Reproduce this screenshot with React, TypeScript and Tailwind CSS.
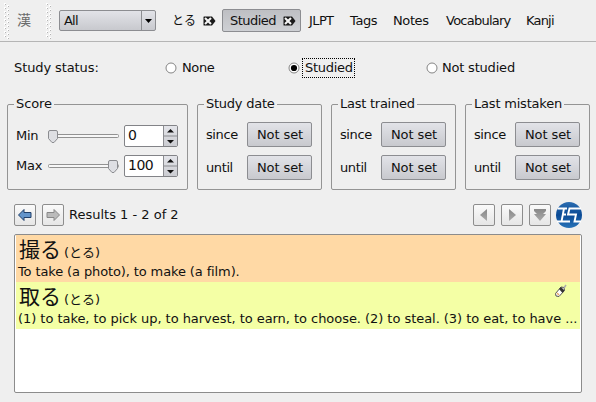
import React from "react";

const font = "font-['DejaVu_Sans','Noto_Sans_CJK_JP',sans-serif]";
const raised =
  "border border-[#8c8d91] rounded-[2px] bg-linear-to-b from-[#e2e3e8] to-[#c8c9ce]";

function Grip() {
  return (
    <svg width="6" height="36" viewBox="0 0 6 36" className="shrink-0">
      {Array.from({ length: 9 }, (_, i) => (
        <g key={i}>
          <rect x="0" y={i * 4} width="2" height="2" fill="#fff" />
          <rect x="1" y={1 + i * 4} width="1" height="1" fill="#b4b4b4" />
          <rect x="3" y={2 + i * 4} width="2" height="2" fill="#fff" />
          <rect x="4" y={3 + i * 4} width="1" height="1" fill="#b4b4b4" />
        </g>
      ))}
    </svg>
  );
}

function ClearTag() {
  return (
    <svg width="13" height="10" viewBox="0 0 13 10" className="shrink-0">
      <path d="M1 .5h8L12.500 5 9 9.500H1Q.5 9.500 .5 9V1Q.5.5 1 .5z" fill="#1a1a1a" />
      <path d="M2 2l6 6M8 2L2 8" stroke="#f4f4f4" strokeWidth="2.100" />
    </svg>
  );
}

function Radio({ on }: { on?: boolean }) {
  return (
    <svg width="12" height="12" viewBox="0 0 12 12" className="shrink-0">
      <circle cx="6" cy="6" r="5" fill="#fff" stroke="#858585" />
      {on && <circle cx="6" cy="6" r="3.1" fill="#000" />}
    </svg>
  );
}

function Group({ title, width, titleClass, children }: { title: string; width: string; titleClass: string; children: React.ReactNode }) {
  return (
    <section className={`relative h-[86px] rounded-[2px] border border-[#949494] ${width}`}>
      <h2 className={`absolute -top-[9px] left-[6px] bg-[#efefef] pl-[2px] leading-4 whitespace-nowrap ${titleClass}`}>{title}</h2>
      {children}
    </section>
  );
}

function DateGroup({ title, titleClass }: { title: string; titleClass: string }) {
  return (
    <Group title={title} width="w-[125px]" titleClass={titleClass}>
      <div className="flex flex-col gap-2 pt-[17px] pl-[8px]">
        {["since", "until"].map((label) => (
          <div key={label} className="flex h-[25px] items-center">
            <span className="w-[41px] tracking-[-0.4px]">{label}</span>
            <button className={`h-[25px] w-[65px] pl-px text-center tracking-[-0.1px] whitespace-nowrap ${raised}`}>Not set</button>
          </div>
        ))}
      </div>
    </Group>
  );
}

function Slider({ end }: { end?: boolean }) {
  return (
    <svg width="71" height="15" viewBox="0 0 71 15" className="shrink-0">
      <rect x="0.5" y="5.5" width="70" height="3" rx="1" fill="#f7f7f7" stroke="#929292" />
      <path
        transform={end ? "translate(60 0)" : "translate(0 0)"}
        d="M2 1.500h6q1.500 0 1.500 1.500v6.500L6 13.500H4L.5 9.500V3Q.5 1.500 2 1.500z"
        fill="#dedfe3"
        stroke="#8b8c90"
      />
    </svg>
  );
}

function Spin({ value }: { value: string }) {
  return (
    <div className="flex h-[22px] w-[54px] overflow-hidden rounded-[2px] border border-[#828387] bg-white">
      <span className="w-[38px] pl-[3px] text-[14px] leading-[19px] tracking-[-0.5px]">{value}</span>
      <svg width="14" height="20" viewBox="0 0 14 20" className="shrink-0 bg-linear-to-b from-[#e4e5ea] to-[#cbccd1]">
        <path d="M.5 0v20M0 10h14" stroke="#8b8c90" />
        <path d="M4 6.500h7L7.500 3zM4 14h7l-3.500 3.500z" fill="#111" />
      </svg>
    </div>
  );
}

function ToolButton({ children }: { children: React.ReactNode }) {
  return (
    <button className="flex size-[22px] items-center justify-center rounded-[2px] border border-[#8d8d8d] bg-linear-to-b from-[#fafafa] to-[#e6e6e6]">
      <svg width="20" height="20" viewBox="0 0 20 20" className="shrink-0">
        {children}
      </svg>
    </button>
  );
}

function Logo() {
  return (
    <svg width="28" height="28" viewBox="0 0 28 28" className="shrink-0">
      <defs>
        <linearGradient id="ball" x1="0" y1="0" x2="0" y2="1">
          <stop offset="0" stopColor="#2a6cb0" />
          <stop offset="0.5" stopColor="#0b4a95" />
          <stop offset="1" stopColor="#2873b8" />
        </linearGradient>
        <linearGradient id="fade" x1="0" y1="0" x2="0" y2="1">
          <stop offset="0" stopColor="#888" />
          <stop offset="1" stopColor="#aaa" />
        </linearGradient>
      </defs>
      <circle cx="14" cy="14" r="13" fill="url(#ball)" />
      <path d="M2.500 7.500H12M26 7.500H14.500L13 13.500H21L19.500 20.500H26M9 7.500L6.500 20.500H15M8 13.500h3M2 20.500h5" fill="none" stroke="#fff" strokeWidth="1.900" />
    </svg>
  );
}

function Entry({ word, gloss, bg, glossClass, children }: { word: string; gloss: string; bg: string; glossClass: string; children?: React.ReactNode }) {
  return (
    <article className={`relative h-[47px] pl-[3px] ${bg}`}>
      <div className="flex h-[29px] items-baseline gap-[3px] whitespace-nowrap leading-[30px]">
        <span className="text-[21px]">{word}</span>
        <span className="text-[13px]">(とる)</span>
      </div>
      <p className={`-ml-px whitespace-nowrap leading-4 ${glossClass}`}>{gloss}</p>
      {children}
    </article>
  );
}

export default function App() {
  return (
    <main className={`flex h-[402px] w-[596px] flex-col overflow-hidden bg-[#efefef] text-[13px] text-[#111] ${font}`}>
      <header className="flex h-[42px] shrink-0 items-center border-b border-[#b5b5b5] pl-1 whitespace-nowrap">
        <Grip />
        <span className="ml-[7px] w-[29px] text-[14px] text-[#6a6a6a]">漢</span>
        <Grip />
        <div className={`ml-[7px] flex h-[21px] w-[97px] items-center ${raised}`}>
          <span className="flex-1 pl-1 tracking-[-0.8px]">All</span>
          <span className="flex h-full w-[14px] items-center justify-center border-l border-[#8c8d91]">
            <svg width="7" height="4" viewBox="0 0 7 4"><path d="M0 0h7L3.500 4z" /></svg>
          </span>
        </div>
        <span className="ml-4 w-[31px] text-[12px]">とる</span>
        <ClearTag />
        <div className="ml-[6px] flex h-[23px] w-[79px] items-center rounded-[2px] border border-[#8c8d91] bg-linear-to-b from-[#bebfc3] to-[#ced0d4] pl-[7px]">
          <span className="w-[53px] tracking-[-0.55px]">Studied</span>
          <ClearTag />
        </div>
        <span className="ml-2 w-[41px] tracking-[-0.6px]">JLPT</span>
        <span className="w-[43px] tracking-[-0.4px]">Tags</span>
        <span className="w-[53px] tracking-[-0.4px]">Notes</span>
        <span className="w-[80px] tracking-[-0.75px]">Vocabulary</span>
        <span className="tracking-[-0.8px]">Kanji</span>
      </header>

      <div className="flex h-[52px] shrink-0 items-center pl-[14px] whitespace-nowrap">
        <span className="w-[151px] tracking-[-0.1px]">Study status:</span>
        <Radio />
        <span className="ml-[5px] w-[106px] tracking-[-0.4px]">None</span>
        <Radio on />
        <span className="ml-[2px] mr-[71px] h-5 w-[53px] border border-dotted border-black pl-[2px] leading-[18px] tracking-[-0.3px]">Studied</span>
        <Radio />
        <span className="ml-[4px] tracking-[-0.2px]">Not studied</span>
      </div>

      <div className="flex h-[108px] shrink-0 gap-[9px] pt-[10px] pl-[7px]">
        <Group title="Score" width="w-[181px]" titleClass="w-[40px] tracking-[-0.1px]">
          <div className="flex flex-col gap-2 pt-[20px] pl-[8px]">
            <div className="flex h-[22px] items-center">
              <span className="w-[32px] tracking-[-0.3px]">Min</span><Slider /><span className="w-[5px]" /><Spin value="0" />
            </div>
            <div className="flex h-[22px] items-center">
              <span className="w-[32px] tracking-[-0.2px]">Max</span><Slider end /><span className="w-[5px]" /><Spin value="100" />
            </div>
          </div>
        </Group>
        <DateGroup title="Study date" titleClass="w-[73px] tracking-[-0.25px]" />
        <DateGroup title="Last trained" titleClass="w-[79px] tracking-[-0.25px]" />
        <DateGroup title="Last mistaken" titleClass="w-[92px] tracking-[-0.2px]" />
      </div>

      <div className="flex h-[25px] shrink-0 items-center pl-[14px]">
        <ToolButton><path d="M3.500 10L9 4.500v3h7v5H9v3z" fill="#6394ca" stroke="#203f69" /></ToolButton>
        <span className="w-[6px]" />
        <ToolButton><path d="M16.500 10L11 4.500v3H4v5h7v3z" fill="#bbb" stroke="#888" /></ToolButton>
        <span className="ml-[5px] flex-1 whitespace-nowrap">Results 1 - 2 of 2</span>
        <div className="flex items-center gap-[6px]">
          <ToolButton><path d="M6 10l7-6v12z" fill="url(#fade)" /></ToolButton>
          <ToolButton><path d="M14 10L7 4v12z" fill="url(#fade)" /></ToolButton>
          <ToolButton><path d="M4 4h12v2l-3 3h3l-6 7-6-7h3L4 6z" fill="url(#fade)" /></ToolButton>
        </div>
        <span className="mr-[13px] ml-[4px] flex"><Logo /></span>
      </div>

      <div className="mt-[7px] ml-[14px] h-[159px] w-[568px] rounded-[2px] border border-[#8c8c8c] bg-white px-px">
        <Entry word="撮る" gloss="To take (a photo), to make (a film)." bg="bg-[#ffd9a5]" glossClass="tracking-[-0.12px]" />
        <Entry word="取る" gloss="(1) to take, to pick up, to harvest, to earn, to choose. (2) to steal. (3) to eat, to have ..." bg="bg-[#f4ffa5]" glossClass="tracking-[-0.045px]">
          <svg width="14" height="14" viewBox="0 0 14 14" className="absolute top-[2px] right-[12px]">
            <path d="M1.500 9.500L7 3l3 0.500 0.500 3L5 12.500l-3-.5z" fill="#fff" stroke="#555" />
            <path d="M7 3l3.500 3.500-2 2.500L5 5z" fill="#333" />
            <path d="M10 4l2-3" stroke="#aaa" strokeWidth="1.500" />
            <path d="M3 9l2 2" stroke="#e8a86b" strokeWidth="1.500" />
          </svg>
        </Entry>
      </div>
    </main>
  );
}
